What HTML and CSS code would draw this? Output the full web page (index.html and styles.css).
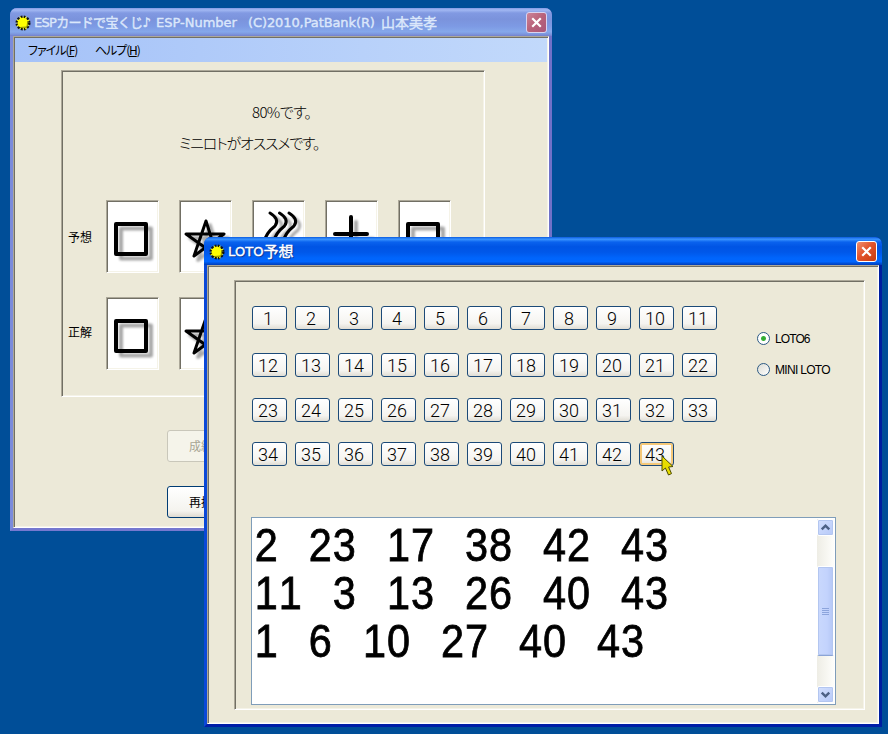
FILE: index.html
```html
<!DOCTYPE html>
<html lang="ja">

<head>
    <meta charset="UTF-8">
    <title>LOTO予想</title>
    <link rel="stylesheet" href="styles.css">
</head>

<body>
    <!-- shared symbols -->
    <svg class="defs" width="0" height="0">
        <symbol id="sun" viewBox="0 0 16 16">
            <circle cx="8" cy="8" r="6.3" fill="#ffff00" stroke="#111" stroke-width="2.4" stroke-dasharray="2 1.3" />
            <circle cx="8" cy="8" r="5" fill="#ffff00" />
            <path d="M5 12.5 L12 12 L12.8 6" fill="none" stroke="#8a8a00" stroke-width="1" />
            <path d="M1.5 5 L3 6 M5 1.5 L6 3 M11 1.5 L10.5 3 M14.5 5 L13 6 M1.5 11 L3 10 M11 14.5 L10.5 13" stroke="#ffff00" stroke-width="1" />
        </symbol>
        <symbol id="close" viewBox="0 0 20 20">
            <path d="M5.5 5.5 L14.5 14.5 M14.5 5.5 L5.5 14.5" stroke="#fff" stroke-width="2.3" />
        </symbol>
        <symbol id="square" viewBox="0 0 49 69">
            <rect class="shade" x="13" y="26.5" width="30" height="30" stroke-width="4" />
            <rect x="8" y="22" width="30" height="30" fill="none" stroke="#000" stroke-width="4" stroke-linejoin="round" />
        </symbol>
        <symbol id="star" viewBox="0 0 49 69">
            <path class="shade" d="M29 23 L17 58 L47 36 L9 36 L40 58 Z" stroke-width="3.5" />
            <path d="M25 19 L13 54 L43 32 L5 32 L36 54 Z" fill="none" stroke="#000" stroke-width="3" stroke-linejoin="round" />
        </symbol>
        <symbol id="waves" viewBox="0 0 49 69">
            <g fill="none" stroke-width="3" stroke-linecap="round">
                <path class="shade" d="M21 15 q10 6 5 13 q-9 7 -11 16 M30 15 q10 6 5 13 q-9 7 -11 16 M39 15 q10 6 5 13 q-9 7 -11 16" />
                <path stroke="#000" d="M16 11 q10 6 5 13 q-9 7 -11 16 M25.5 11 q10 6 5 13 q-9 7 -11 16 M35 11 q10 6 5 13 q-9 7 -11 16" />
            </g>
        </symbol>
        <symbol id="cross" viewBox="0 0 49 69">
            <path class="shade" d="M29 20 V54 M12 37 H46" stroke-width="4" />
            <path d="M24 15 V49 M8 32 H40" stroke="#000" stroke-width="4" stroke-linecap="round" />
        </symbol>
    </svg>

    <div class="window main-window">
        <div class="titlebar">
            <svg class="app-icon"><use href="#sun" /></svg>
            <div class="title">
                <span class="t-name">ESPカードで宝くじ♪</span>
                <span class="t-product">ESP-Number</span>
                <span class="t-copy">(C)2010,PatBank(R)</span>
                <span class="t-author">山本美孝</span>
            </div>
            <div class="close-btn"><svg><use href="#close" /></svg></div>
        </div>
        <div class="client">
            <div class="menu">
                <span class="menu-file">ファイル(<u>F</u>)</span>
                <span class="menu-help">ヘルプ(<u>H</u>)</span>
            </div>
            <div class="panel result-panel">
                <p class="rate">80%です。</p>
                <p class="advice">ミニロトがオススメです。</p>
                <div class="card-row">
                    <span class="card-label">予想</span>
                    <div class="card"><svg><use href="#square" /></svg></div>
                    <div class="card"><svg><use href="#star" /></svg></div>
                    <div class="card"><svg><use href="#waves" /></svg></div>
                    <div class="card"><svg><use href="#cross" /></svg></div>
                    <div class="card"><svg><use href="#square" /></svg></div>
                </div>
                <div class="card-row">
                    <span class="card-label">正解</span>
                    <div class="card"><svg><use href="#square" /></svg></div>
                    <div class="card"><svg><use href="#star" /></svg></div>
                </div>
            </div>
            <div class="actions">
                <button class="btn" disabled>成績</button>
                <button class="btn">再挑戦</button>
            </div>
        </div>
    </div>

    <div class="window loto-window active">
        <div class="titlebar">
            <svg class="app-icon"><use href="#sun" /></svg>
            <div class="title"><span class="t-loto">LOTO</span><span class="t-yosou">予想</span></div>
            <div class="close-btn"><svg><use href="#close" /></svg></div>
        </div>
        <div class="client">
            <div class="panel loto-panel">
                <div class="picker">
                    <div class="numbers">
                        <div class="num-row">
                            <button>1</button><button>2</button><button>3</button><button>4</button><button>5</button><button>6</button><button>7</button><button>8</button><button>9</button><button>10</button><button>11</button>
                        </div>
                        <div class="num-row">
                            <button>12</button><button>13</button><button>14</button><button>15</button><button>16</button><button>17</button><button>18</button><button>19</button><button>20</button><button>21</button><button>22</button>
                        </div>
                        <div class="num-row">
                            <button>23</button><button>24</button><button>25</button><button>26</button><button>27</button><button>28</button><button>29</button><button>30</button><button>31</button><button>32</button><button>33</button>
                        </div>
                        <div class="num-row">
                            <button>34</button><button>35</button><button>36</button><button>37</button><button>38</button><button>39</button><button>40</button><button>41</button><button>42</button><button class="hot">43<svg class="cursor" viewBox="0 0 13 22"><path d="M1 1 L1 16 L4.4 13 L7.5 20 L10.5 18.6 L7.6 12 L12 11.5 Z" fill="#e6dc00" stroke="#4c4a00" stroke-width="1" /></svg></button>
                        </div>
                    </div>
                    <div class="modes">
                        <label class="mode"><span class="radio checked"></span><span class="mode-six">LOTO6</span></label>
                        <label class="mode"><span class="radio"></span><span class="mode-mini">MINI LOTO</span></label>
                    </div>
                </div>
                <div class="output">
                    <pre>2  23  17  38  42  43
11  3  13  26  40  43
1  6  10  27  40  43</pre>
                    <div class="scrollbar">
                        <div class="sb-btn"><svg viewBox="0 0 15 16"><path d="M3.5 10 L7.5 6 L11.5 10" /></svg></div>
                        <div class="sb-track">
                            <div class="sb-thumb"><i></i><i></i><i></i><i></i></div>
                        </div>
                        <div class="sb-btn"><svg viewBox="0 0 15 16"><path d="M3.5 6 L7.5 10 L11.5 6" /></svg></div>
                    </div>
                </div>
            </div>
        </div>
    </div>
</body>

</html>
```
FILE: styles.css
```css
* {
    box-sizing: border-box;
}

body {
    margin: 0;
    width: 888px;
    height: 734px;
    position: relative;
    overflow: hidden;
    background: #004e98;
    font-family: "Noto Sans CJK JP", sans-serif;
    font-size: 12px;
    color: #000;
}

p,
pre {
    margin: 0;
}

button {
    font-family: inherit;
    padding: 0;
}

.defs {
    position: absolute;
}

.shade {
    fill: none;
    stroke: #a8a8a8;
    stroke-linejoin: round;
    stroke-linecap: round;
    filter: blur(0.8px);
}

/* windows */
.window {
    position: absolute;
    display: flex;
    flex-direction: column;
    border: 3px solid #7b8bdc;
    border-top: none;
    border-radius: 7px 7px 0 0;
    background: #7b8bdc;
}

.main-window {
    left: 10px;
    top: 8px;
    width: 542px;
    height: 523px;
    border-right-color: #7071c8;
    border-bottom-color: #7578d0;
}

.loto-window {
    left: 204px;
    top: 237px;
    width: 678px;
    height: 490px;
    border-color: #0a48d8;
    border-right-color: #001ea0;
    border-bottom-color: #001ea8;
    background: #0a48d8;
}

.titlebar {
    display: flex;
    align-items: center;
    flex: none;
    height: 28px;
    margin: 0 -3px;
    padding: 1px 5px 0 5px;
    border-radius: 7px 7px 0 0;
    background: linear-gradient(#8299e4 0, #a2b8f2 7%, #8199e2 18%, #7b93dc 40%, #7d9ae4 65%, #85a8ea 85%, #7b94dc 94%, #7480cc 100%);
    color: #dbe7fb;
}

.active .titlebar {
    background: linear-gradient(#0a5be0 0, #3a94ff 8%, #0a62ee 18%, #0054e4 35%, #0058ea 55%, #0065fc 75%, #0066ff 88%, #0050d8 94%, #003cb8 100%);
    color: #fff;
    text-shadow: 1px 1px 1px #0a2a80;
}

.app-icon {
    width: 16px;
    height: 16px;
    flex: none;
}

.title {
    display: flex;
    flex: 1;
    margin-left: 3px;
    font-family: "DejaVu Sans", "Noto Sans CJK JP", sans-serif;
    font-size: 13px;
    line-height: 26px;
    white-space: nowrap;
    -webkit-text-stroke: 0.4px currentColor;
}

.t-name {
    width: 122px;
    letter-spacing: -0.7px;
}

.t-product {
    width: 92px;
}

.t-copy {
    width: 133px;
    letter-spacing: -0.1px;
}

.t-author {
    font-size: 14px;
}

.t-loto {
    letter-spacing: 0.1px;
}

.t-yosou {
    font-size: 15px;
}

.close-btn {
    width: 21px;
    height: 21px;
    flex: none;
    border: 1px solid #d8d4f0;
    border-radius: 3px;
    background: linear-gradient(135deg, #cc8498, #b8627a 50%, #a8587c);
}

.active .close-btn {
    border-color: #fff;
    background: linear-gradient(135deg, #f09070, #e2532c 45%, #c83c10);
}

.close-btn svg {
    display: block;
    width: 19px;
    height: 19px;
}

/* sunken 3D edge: light outer line, dark inner line */
.client,
.panel,
.card {
    border: 1px solid;
    border-color: #aca899 #fff #fff #aca899;
    box-shadow: inset 1px 1px #716f64, inset -1px -1px #f5f3e8;
    padding: 1px;
}

.client {
    flex: 1;
    background-color: #ece9d8;
}

/* main window */
.menu {
    display: flex;
    height: 24px;
    padding-left: 13px;
    line-height: 23px;
    font-size: 12px;
    font-feature-settings: "palt";
    background: linear-gradient(90deg, #a5c2f8, #c2d9fb);
}

.menu-file {
    width: 67px;
    letter-spacing: -1px;
}

.menu-help {
    letter-spacing: -1.1px;
}

.result-panel {
    width: 424px;
    height: 327px;
    margin: 8px 0 0 46px;
    padding: 1px 0 0 6px;
}

.rate,
.advice {
    height: 31px;
    line-height: 29px;
    font-size: 15px;
    font-weight: 300;
    font-feature-settings: "palt";
    white-space: nowrap;
}

.rate {
    margin-top: 25px;
    padding-left: 184px;
    letter-spacing: -0.6px;
}

.advice {
    padding-left: 111px;
    letter-spacing: -1.2px;
}

.card-row {
    display: flex;
    align-items: center;
    margin-top: 41px;
    gap: 20px;
}

.card-row + .card-row {
    margin-top: 24px;
}

.card-label {
    width: 18px;
    white-space: nowrap;
}

.card-row + .card-row .card-label {
    padding-bottom: 4px;
}

.card {
    width: 53px;
    height: 73px;
    background: #fff;
}

.card svg {
    display: block;
    width: 49px;
    height: 69px;
}

.actions {
    display: flex;
    flex-direction: column;
    align-items: flex-start;
    gap: 24px;
    margin: 33px 0 0 152px;
}

.btn {
    width: 110px;
    height: 32px;
    padding-left: 21px;
    text-align: left;
    font-size: 12px;
    line-height: 28px;
    color: #000;
    border: 1px solid #003c74;
    border-radius: 3px;
    background: linear-gradient(#fff, #f4f3ee 80%, #dedad0);
}

.btn:disabled {
    color: #a8a594;
    border-color: #c9c7ba;
    background: #f5f4ea;
}

/* loto window */
.loto-panel {
    width: 631px;
    height: 430px;
    margin: 13px 0 0 25px;
    padding: 25px 0 0 16px;
}

.picker {
    display: flex;
    height: 211px;
    padding-left: 1px;
}

.numbers {
    width: 505px;
}

.num-row {
    display: flex;
    gap: 8px;
    margin-bottom: 23px;
}

.num-row:nth-child(2) {
    margin-bottom: 21px;
}

.num-row:nth-child(3) {
    margin-bottom: 20px;
}

.num-row button {
    position: relative;
    width: 35px;
    height: 24px;
    padding: 1px 3px 0 0;
    line-height: 22px;
    font-family: Roboto, sans-serif;
    font-size: 18px;
    font-weight: 300;
    color: #000;
    border: 1px solid #1c4a78;
    border-radius: 3px;
    background: linear-gradient(#fff, #f5f4f0 75%, #e0ddd4);
}

.num-row .hot {
    box-shadow: inset 0 0 0 2px #f5c878;
}

.cursor {
    position: absolute;
    left: 21px;
    top: 12px;
    width: 13px;
    height: 22px;
}

.modes {
    padding-top: 26px;
}

.mode {
    display: flex;
    align-items: center;
    height: 13px;
    margin-bottom: 18px;
    font-family: "Liberation Sans", sans-serif;
    font-size: 12px;
    white-space: nowrap;
}

.radio {
    width: 13px;
    height: 13px;
    margin-right: 5px;
    border: 1px solid #2c5a84;
    border-radius: 50%;
    background: linear-gradient(135deg, #dcdcd4, #fff);
}

.radio.checked {
    background: radial-gradient(circle, #2ea82e 0, #3ab03a 2px, #fff 3px);
}

.mode-six {
    letter-spacing: -0.9px;
}

.mode-mini {
    letter-spacing: -0.7px;
}

.output {
    display: flex;
    justify-content: space-between;
    width: 585px;
    height: 188px;
    padding: 1px;
    border: 1px solid #7f9db9;
    background: #fff;
}

.output pre {
    padding: 2px 0 0 2px;
    font-family: "Liberation Sans", sans-serif;
    font-size: 46px;
    line-height: 48px;
    font-kerning: none;
    letter-spacing: 1.1px;
    word-spacing: 2.8px;
    transform: scaleX(0.9);
    transform-origin: 0 0;
    -webkit-text-stroke: 0.8px #000;
}

.scrollbar {
    display: flex;
    flex-direction: column;
    width: 17px;
    background: linear-gradient(90deg, #eeede5, #fefefb);
}

.sb-btn,
.sb-thumb {
    border: 1px solid #fff;
    border-radius: 2px;
    box-shadow: inset 0 0 0 1px #b3c6f0;
    background: linear-gradient(135deg, #d4e0fe, #b6c9f8);
}

.sb-btn {
    height: 17px;
    flex: none;
}

.sb-btn svg {
    display: block;
    width: 15px;
    height: 15px;
}

.sb-btn path {
    fill: none;
    stroke: #4d6185;
    stroke-width: 2.6;
}

.sb-track {
    flex: 1;
    padding-top: 30px;
}

.sb-thumb {
    display: flex;
    flex-direction: column;
    align-items: center;
    justify-content: center;
    gap: 1px;
    height: 90px;
    background: linear-gradient(90deg, #c9d8fd, #c3d3fd 60%, #b4c7f5);
    border-bottom-color: #8ba4d6;
}

.sb-thumb i {
    width: 7px;
    height: 1px;
    background: #8ca4dc;
}
```
